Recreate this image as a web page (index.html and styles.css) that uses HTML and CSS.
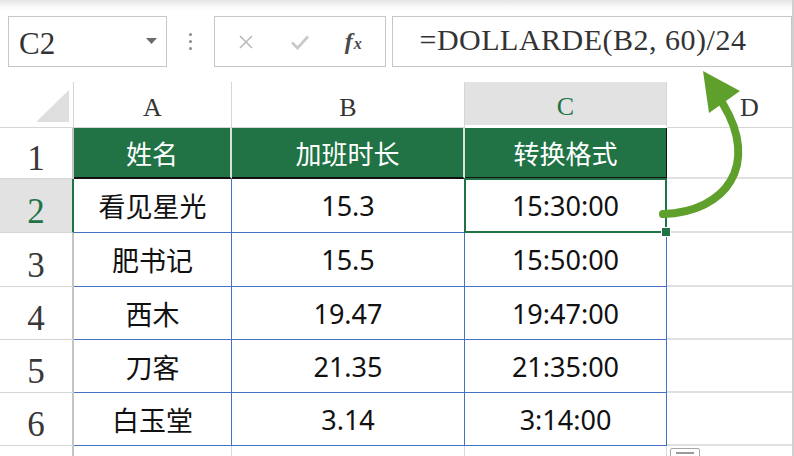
FILE: index.html
```html
<!DOCTYPE html>
<html lang="zh">
<head>
<meta charset="utf-8">
<title>DOLLARDE</title>
<link rel="stylesheet" href="styles.css">
</head>
<body>
<div class="page">
  <div class="toolbar">
    <div class="namebox">
      <span class="name">C2</span>
      <svg class="caret" width="11" height="6" viewBox="0 0 11 6"><polygon points="0,0 11,0 5.5,6" fill="#6b6b6b"/></svg>
    </div>
    <div class="dots"><i></i><i></i><i></i></div>
    <div class="fnbox">
      <svg class="ico" width="16" height="16" viewBox="0 0 16 16"><path d="M2 2 L14 14 M14 2 L2 14" stroke="#b9b9b9" stroke-width="1.6" fill="none"/></svg>
      <svg class="ico" width="20" height="16" viewBox="0 0 20 16"><path d="M2 8.5 L7.5 14 L18 2.5" stroke="#c9c9c9" stroke-width="2.6" fill="none"/></svg>
      <span class="fx"><span class="f">f</span><span class="x">x</span></span>
    </div>
    <div class="formula">=DOLLARDE(B2, 60)/24</div>
  </div>

  <div class="sheet">
    <div class="corner"><svg width="33" height="32" viewBox="0 0 33 32"><polygon points="33,0 33,32 0,32" fill="#dedede"/></svg></div>
    <div class="colhead">A</div>
    <div class="colhead">B</div>
    <div class="colhead sel">C</div>
    <div class="colhead">D</div>

    <div class="rowhead">1</div>
    <div class="th">姓名</div>
    <div class="th">加班时长</div>
    <div class="th last">转换格式</div>
    <div class="empty"></div>

    <div class="rowhead sel">2</div>
    <div class="td">看见星光</div>
    <div class="td">15.3</div>
    <div class="td active">15:30:00</div>
    <div class="empty"></div>

    <div class="rowhead">3</div>
    <div class="td">肥书记</div>
    <div class="td">15.5</div>
    <div class="td">15:50:00</div>
    <div class="empty"></div>

    <div class="rowhead">4</div>
    <div class="td">西木</div>
    <div class="td">19.47</div>
    <div class="td">19:47:00</div>
    <div class="empty"></div>

    <div class="rowhead">5</div>
    <div class="td">刀客</div>
    <div class="td">21.35</div>
    <div class="td">21:35:00</div>
    <div class="empty"></div>

    <div class="rowhead">6</div>
    <div class="td">白玉堂</div>
    <div class="td">3.14</div>
    <div class="td">3:14:00</div>
    <div class="empty"></div>

    <div class="rowhead"></div>
    <div class="empty"></div>
    <div class="empty"></div>
    <div class="empty"></div>
    <div class="empty"></div>
  </div>

  <div class="pasteopt"><i></i></div>

  <svg class="arrow" width="794" height="456" viewBox="0 0 794 456">
    <path d="M663 214 C 726 212 760 165 723 104" stroke="#5fa02c" stroke-width="8" fill="none" stroke-linecap="round"/>
    <polygon points="703,71 740,91 709,113" fill="#5fa02c"/>
  </svg>
</div>
</body>
</html>
```

FILE: styles.css
```css
* { box-sizing: border-box; }
html, body { margin: 0; padding: 0; background: #fff; }
body { width: 794px; height: 456px; overflow: hidden; }

.page {
  position: relative;
  width: 794px;
  height: 456px;
  overflow: hidden;
  font-family: "Noto Sans", "Noto Sans CJK SC", sans-serif;
  border-right: 2px solid #d0d0d0;
}

.toolbar {
  height: 82px;
  display: flex;
  align-items: flex-start;
  padding: 16px 0 0 8px;
  background: linear-gradient(#e4e4e4 0, #f7f7f7 6px, #fff 10px);
}

.namebox {
  width: 159px;
  height: 51px;
  border: 1px solid #c6c6c6;
  background: #fff;
  display: flex;
  align-items: center;
  justify-content: space-between;
  padding: 4px 9px 0 10px;
}
.name {
  font-family: "Liberation Serif", serif;
  font-size: 31px;
  color: #333;
}
.caret { margin-top: -6px; }

.dots {
  width: 47px;
  height: 51px;
  display: flex;
  flex-direction: column;
  align-items: center;
  justify-content: center;
  gap: 4px;
}
.dots i {
  display: block;
  width: 3px;
  height: 3px;
  background: #8a8a8a;
  border-radius: 50%;
}

.fnbox {
  width: 172px;
  height: 51px;
  border: 1px solid #c6c6c6;
  background: #fff;
  display: flex;
  align-items: center;
  padding: 0 0 0 23px;
}
.fnbox .ico:nth-child(1) { margin-right: 36px; }
.fnbox .ico:nth-child(2) { margin-right: 35px; }
.fx {
  font-family: "Liberation Serif", serif;
  font-style: italic;
  font-weight: bold;
  color: #4a4a4a;
  display: flex;
  align-items: baseline;
}
.fx .f { font-size: 24px; }
.fx .x { font-size: 16px; margin-left: 1px; }

.formula {
  margin-left: 6px;
  width: 401px;
  height: 51px;
  border: 1px solid #c6c6c6;
  background: #fff;
  font-family: "Liberation Serif", serif;
  font-size: 30px;
  color: #333;
  padding: 6px 0 0 27px;
  white-space: nowrap;
  letter-spacing: 0.5px;
}

.sheet {
  display: grid;
  grid-template-columns: 74px 158px 233px 202px 166px;
  grid-template-rows: 46px 51px 54px 54px 53px 53px 53px 40px;
}
.sheet > div {
  display: flex;
  align-items: center;
  justify-content: center;
  white-space: nowrap;
}

.corner {
  border-right: 1px solid #d6d6d6;
  border-bottom: 1px solid #d6d6d6;
  justify-content: flex-end !important;
  align-items: flex-end !important;
  padding: 0 4px 5px 0;
}

.colhead {
  font-family: "Liberation Serif", serif;
  font-size: 26px;
  color: #333;
  padding-top: 6px;
  border-right: 1px solid #d6d6d6;
  border-bottom: 1px solid #d6d6d6;
}
.colhead.sel {
  background: #e2e2e2;
  color: #217346;
  border-bottom: 3px solid #fff;
}

.rowhead {
  font-family: "Liberation Serif", serif;
  font-size: 35px;
  color: #383838;
  padding-top: 12px;
  border-right: 2px solid #c4c4c4;
  border-bottom: 1px solid #d6d6d6;
}
.rowhead.sel {
  background: #e2e2e2;
  color: #217346;
  border-right: 2px solid #217346;
}

.th {
  background: #217346;
  color: #fff;
  font-size: 26px;
  border-right: 2px solid #d7e3da;
  border-bottom: 2px solid #111;
}
.th.last { border-right: 1px solid #111; }

.td {
  font-size: 27px;
  color: #111;
  border-right: 1px solid #4472c4;
  border-bottom: 1px solid #4472c4;
}
.td.active { position: relative; }
.td.active::after {
  content: "";
  position: absolute;
  left: -1px;
  top: -1px;
  right: -1px;
  bottom: -1px;
  border: 2px solid #217346;
}
.td.active::before {
  content: "";
  position: absolute;
  right: -5px;
  bottom: -5px;
  width: 8px;
  height: 8px;
  background: #217346;
  border: 1px solid #fff;
  z-index: 2;
}

.empty {
  border-right: 1px solid #d9d9d9;
  border-bottom: 2px solid #e0e0e0;
}

.pasteopt {
  position: absolute;
  left: 670px;
  top: 448px;
  width: 30px;
  height: 14px;
  border: 1px solid #a8a8a8;
  border-radius: 2px;
  background: #fff;
}
.pasteopt i {
  position: absolute;
  left: 5px;
  top: 3px;
  width: 18px;
  height: 2px;
  background: #9a9a9a;
}

.arrow {
  position: absolute;
  left: 0;
  top: 0;
  pointer-events: none;
}
```
